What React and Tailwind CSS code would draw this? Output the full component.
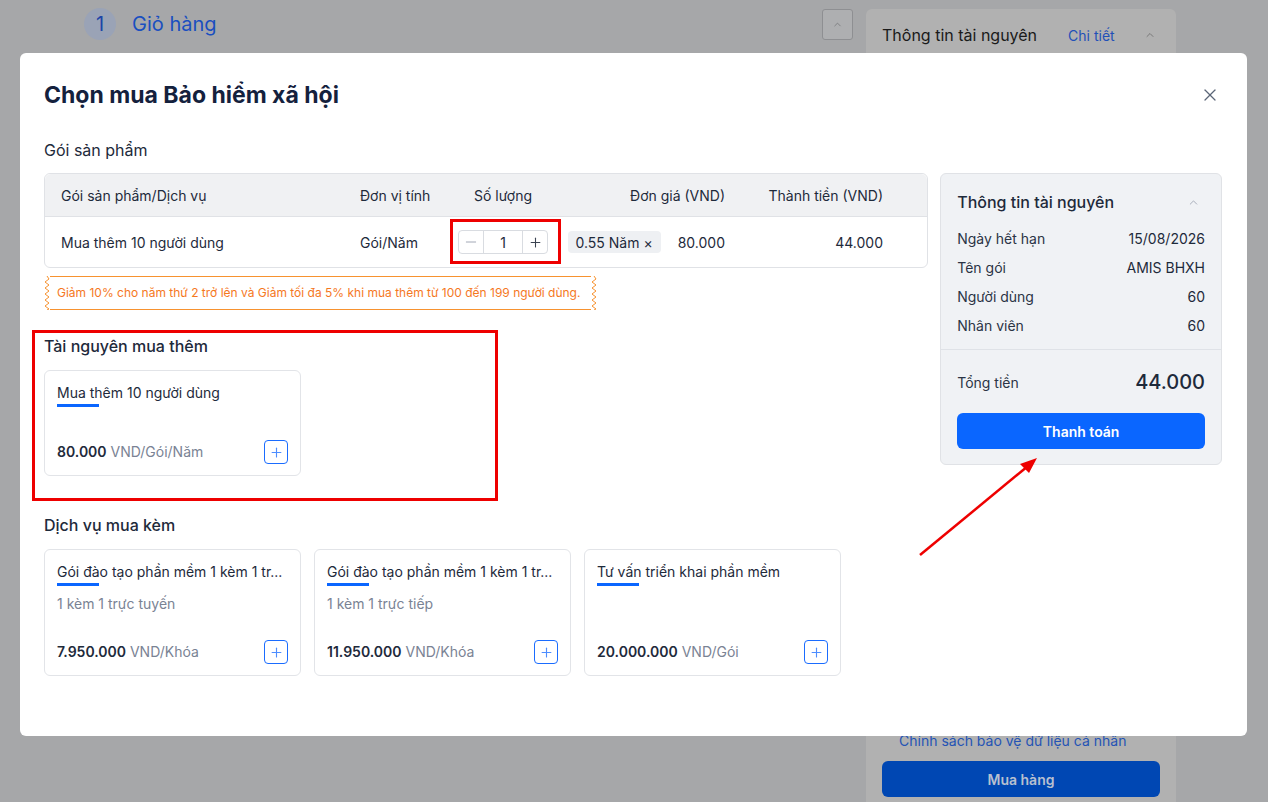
import React from 'react';
import { ChevronUp, X, Plus, Minus } from 'lucide-react';

const font = { fontFamily: 'Inter, "Noto Sans", sans-serif' };

const Zigzag = () => (
    <svg width="6" height="34" viewBox="0 0 6 34" className="shrink-0">
        <path d="M3 0 L5 3 L1 6 L5 9 L1 12 L5 15 L1 18 L5 21 L1 24 L5 27 L1 30 L5 33 L3 34" fill="none" stroke="#f7922f" strokeWidth="1" />
    </svg>
);

const PlusButton = () => (
    <button className="w-6 h-6 flex items-center justify-center border border-[#1a6cff] rounded-[4px] text-[#4d8dff]">
        <Plus size={15} strokeWidth={1.8} />
    </button>
);

const Card = ({ title, subtitle, price, unit, height }) => (
    <div className={`w-[257px] ${height} border border-[#e2e4e8] rounded-[6px] px-3 pt-3 pb-[11px] flex flex-col justify-between`}>
        <div>
            <p className="text-[14px] leading-5 text-[#1e2a3b] whitespace-nowrap">{title}</p>
            <div className="w-[42px] h-[3px] bg-[#0a66ff] mt-[1px]"></div>
            {subtitle && <p className="text-[14px] leading-5 text-[#7a8394] mt-[8px]">{subtitle}</p>}
        </div>
        <div className="flex items-center justify-between">
            <p className="text-[14px] leading-5">
                <span className="font-semibold text-[#1e2a3b]">{price}</span>
                <span className="text-[#7a8394]"> {unit}</span>
            </p>
            <PlusButton />
        </div>
    </div>
);

const InfoRow = ({ label, value }) => (
    <div className="flex items-center justify-between text-[14px] leading-5">
        <span className="text-[#2b3445]">{label}</span>
        <span className="text-[#1e2a3b]">{value}</span>
    </div>
);

const App = () => {
    return (
        <div style={font} className="relative w-full h-screen overflow-hidden bg-[#a6a7a9]">
            {/* trang nen phia sau */}
            <div className="flex h-full">
                <div className="w-[822px] pl-[84px] pt-[8px]">
                    <div className="flex items-center gap-4">
                        <span className="w-8 h-8 rounded-full bg-[#9aa3b6] flex items-center justify-center text-[20px] text-[#1d44a8]">1</span>
                        <span className="text-[20px] text-[#1a4fc0]">Giỏ hàng</span>
                    </div>
                </div>
                <div className="pt-[9px]">
                    <div className="w-[31px] h-[31px] border border-[#8e8f92] rounded-[3px] bg-[#aeafb1] flex items-center justify-center text-[#6c6d70]">
                        <ChevronUp size={11} strokeWidth={1.5} />
                    </div>
                </div>
                <div className="ml-[13px] mt-[9px] w-[310px] bg-[#b1b1b1] rounded-t-[6px] flex flex-col justify-between">
                    <div className="flex items-center pl-4 pr-5 pt-[14px]">
                        <span className="text-[16px] text-[#1a1a1a]">Thông tin tài nguyên</span>
                        <span className="text-[14px] text-[#1f50b8] ml-[31px]">Chi tiết</span>
                        <span className="ml-auto text-[#666]"><ChevronUp size={12} strokeWidth={1.5} /></span>
                    </div>
                    <div className="px-4 pb-[5px]">
                        <p className="text-[14px] text-[#2554b5] pl-[17px] mb-[10px]">Chính sách bảo vệ dữ liệu cá nhân</p>
                        <button className="w-[278px] h-9 rounded-[6px] bg-[#0047b3] text-[14px] font-semibold text-[#b8c0d0]">Mua hàng</button>
                    </div>
                </div>
            </div>

            {/* hop thoai */}
            <div className="fixed inset-0 pl-[20px] pt-[53px]">
                <div className="w-[1227px] h-[683px] bg-white rounded-[6px] pl-6 pr-[25px] pt-[26px]">
                    <div className="flex items-center justify-between">
                        <h1 className="text-[23px] leading-8 font-bold text-[#14213d]">Chọn mua Bảo hiểm xã hội</h1>
                        <button className="text-[#5b6577] mr-[2px]"><X size={20} strokeWidth={1.5} /></button>
                    </div>
                    <div className="flex gap-3 mt-[29px]">
                        <div className="w-[885px]">
                            <h2 className="text-[16px] leading-5 text-[#1e2a3b]">Gói sản phẩm</h2>
                            <div className="relative mt-[13px] border border-[#e0e2e6] rounded-[6px]">
                                <div className="flex items-center h-[43px] bg-[#f0f1f3] rounded-t-[6px] border-b border-[#e0e2e6] text-[14px] text-[#1e2a3b]">
                                    <div className="w-[315px] pl-4">Gói sản phẩm/Dịch vụ</div>
                                    <div className="w-[90px]">Đơn vị tính</div>
                                    <div className="w-[106px] text-center">Số lượng</div>
                                    <div className="w-[169px] text-right">Đơn giá (VND)</div>
                                    <div className="w-[158px] text-right">Thành tiền (VND)</div>
                                </div>
                                <div className="flex items-center h-[50px] text-[14px] text-[#1e2a3b]">
                                    <div className="w-[315px] pl-4">Mua thêm 10 người dùng</div>
                                    <div className="w-[90px]">Gói/Năm</div>
                                    <div className="w-[106px] flex justify-center">
                                        <div className="flex h-6 w-[90px] border border-[#d9dce1] rounded-[4px]">
                                            <span className="w-[25px] flex items-center justify-center text-[#8a93a3] border-r border-[#d9dce1]"><Minus size={16} strokeWidth={1.2} /></span>
                                            <span className="flex-1 flex items-center justify-center">1</span>
                                            <span className="w-[25px] flex items-center justify-center text-[#3b4352] border-l border-[#d9dce1]"><Plus size={15} strokeWidth={1.7} /></span>
                                        </div>
                                    </div>
                                    <div className="w-[169px] flex items-center justify-end gap-[17px]">
                                        <span className="h-[22px] px-2 flex items-center rounded-[4px] bg-[#eef0f3]">0.55 Năm ×</span>
                                        <span>80.000</span>
                                    </div>
                                    <div className="w-[158px] text-right">44.000</div>
                                </div>
                                <div className="absolute left-[405px] top-[45px] w-[111px] h-[45px] border-[3px] border-[#ee0000]"></div>
                            </div>
                            <div className="mt-2 w-[553px] h-[34px] flex items-stretch">
                                <Zigzag />
                                <div className="flex-1 border-y border-[#f7922f] flex items-center pl-[7px] text-[12px] text-[#f5781e]">
                                    Giảm 10% cho năm thứ 2 trở lên và Giảm tối đa 5% khi mua thêm từ 100 đến 199 người dùng.
                                </div>
                                <Zigzag />
                            </div>

                            <div className="relative mt-[24px]">
                                <h2 className="text-[16px] leading-6 font-medium text-[#1e2a3b]">Tài nguyên mua thêm</h2>
                                <div className="mt-3">
                                    <Card title="Mua thêm 10 người dùng" price="80.000" unit="VND/Gói/Năm" height="h-[106px]" />
                                </div>
                                <div className="absolute left-[-12px] top-[-4px] w-[466px] h-[171px] border-[3px] border-[#ee0000]"></div>
                            </div>

                            <h2 className="mt-[37px] text-[16px] leading-6 font-medium text-[#1e2a3b]">Dịch vụ mua kèm</h2>
                            <div className="mt-3 flex gap-[13px]">
                                <Card title="Gói đào tạo phần mềm 1 kèm 1 tr..." subtitle="1 kèm 1 trực tuyến" price="7.950.000" unit="VND/Khóa" height="h-[127px]" />
                                <Card title="Gói đào tạo phần mềm 1 kèm 1 tr..." subtitle="1 kèm 1 trực tiếp" price="11.950.000" unit="VND/Khóa" height="h-[127px]" />
                                <Card title="Tư vấn triển khai phần mềm" price="20.000.000" unit="VND/Gói" height="h-[127px]" />
                            </div>
                        </div>

                        <div className="w-[282px] mt-[33px] self-start bg-[#f0f2f5] border border-[#e0e2e6] rounded-[6px]">
                            <div className="px-4 pt-[16px] pb-[13px]">
                                <div className="flex items-center justify-between">
                                    <span className="text-[16px] leading-6 font-medium text-[#1e2a3b]">Thông tin tài nguyên</span>
                                    <span className="text-[#8a93a3] mr-[5px]"><ChevronUp size={13} strokeWidth={1.3} /></span>
                                </div>
                                <div className="mt-[15px] flex flex-col gap-[9px]">
                                    <InfoRow label="Ngày hết hạn" value="15/08/2026" />
                                    <InfoRow label="Tên gói" value="AMIS BHXH" />
                                    <InfoRow label="Người dùng" value="60" />
                                    <InfoRow label="Nhân viên" value="60" />
                                </div>
                            </div>
                            <div className="border-t border-[#dfe2e7] px-4 pt-[18px] pb-[15px]">
                                <div className="flex items-center justify-between">
                                    <span className="text-[14px] text-[#2b3445]">Tổng tiền</span>
                                    <span className="text-[20px] leading-7 font-medium text-[#1e2a3b]">44.000</span>
                                </div>
                                <button className="mt-[17px] w-full h-9 rounded-[6px] bg-[#0a66ff] text-white text-[14px] font-semibold">Thanh toán</button>
                            </div>
                        </div>
                    </div>
                </div>
            </div>

            {/* mui ten chu thich */}
            <svg className="fixed inset-0 pointer-events-none" width="1268" height="802">
                <line x1="920" y1="555" x2="1028" y2="466" stroke="#ee0000" strokeWidth="2.5" />
                <polygon points="1037,458 1020,464 1029,473" fill="#ee0000" />
            </svg>
        </div>
    );
};

export default App;
